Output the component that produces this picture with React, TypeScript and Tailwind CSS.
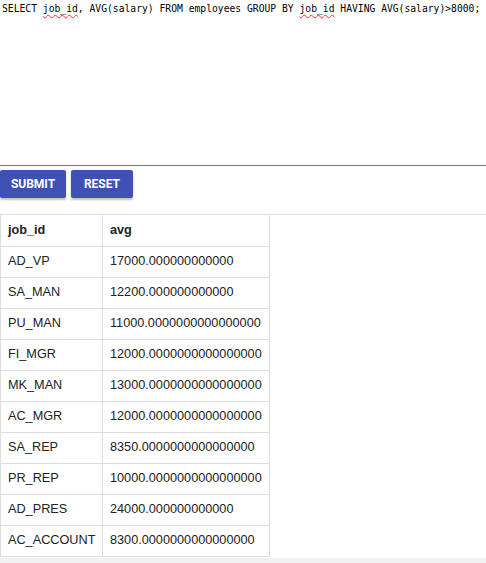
import React from "react";

const rows: [string, string][] = [
  ["AD_VP", "17000.000000000000"],
  ["SA_MAN", "12200.000000000000"],
  ["PU_MAN", "11000.0000000000000000"],
  ["FI_MGR", "12000.0000000000000000"],
  ["MK_MAN", "13000.0000000000000000"],
  ["AC_MGR", "12000.0000000000000000"],
  ["SA_REP", "8350.0000000000000000"],
  ["PR_REP", "10000.0000000000000000"],
  ["AD_PRES", "24000.000000000000"],
  ["AC_ACCOUNT", "8300.0000000000000000"],
];

const buttons: { label: string; cls: string }[] = [
  { label: "SUBMIT", cls: "w-[66px]" },
  { label: "RESET", cls: "w-[62px]" },
];

export default function App() {
  return (
    <div className="w-[486px] h-[563px] bg-white overflow-hidden flex flex-col">
      <div className="h-[166px] shrink-0 border-b border-[#767676] px-[2px] pt-[3px]">
        <div className="text-[9.7px] leading-[12px] text-black whitespace-nowrap" style={{ fontFamily: '"DejaVu Sans Mono", "Liberation Mono", monospace' }}>
          SELECT <span className="underline decoration-wavy decoration-red-500 underline-offset-2">job_id</span>, AVG(salary) FROM employees GROUP BY <span className="underline decoration-wavy decoration-red-500 underline-offset-2">job_id</span> HAVING AVG(salary)&gt;8000;
        </div>
      </div>
      <div className="flex shrink-0 gap-[5px] pt-[4px] h-[49px] border-b border-[#e0e0e0]">
        {buttons.map((b) => (
          <button
            key={b.label}
            className={`${b.cls} h-[28px] flex items-center justify-center bg-[#3f51b5] text-white text-[12px] font-bold rounded-[2px] shadow-[0_2px_2px_rgba(0,0,0,0.25)]`}
            style={{ fontFamily: 'Roboto, "Liberation Sans", sans-serif' }}
          >
            {b.label}
          </button>
        ))}
      </div>
      <div className="shrink-0" style={{ fontFamily: '"Liberation Sans", Arial, sans-serif' }}>
        <table className="border-collapse table-fixed w-[269px] text-[12.7px] text-[#222]">
          <thead>
            <tr className="h-[31px]">
              <th className="w-[102px] border border-[#dddddd] border-t-0 text-left font-bold px-[7px]">job_id</th>
              <th className="w-[167px] border border-[#dddddd] border-t-0 text-left font-bold px-[7px] whitespace-nowrap">avg</th>
            </tr>
          </thead>
          <tbody>
            {rows.map(([a, b]) => (
              <tr key={a} className="h-[31px]">
                <td className="border border-[#dddddd] px-[7px] whitespace-nowrap">{a}</td>
                <td className="border border-[#dddddd] px-[7px] whitespace-nowrap">{b}</td>
              </tr>
            ))}
          </tbody>
        </table>
        <div className="h-[8px] bg-[#f1f1f1] mt-[1px]"></div>
      </div>
    </div>
  );
}
